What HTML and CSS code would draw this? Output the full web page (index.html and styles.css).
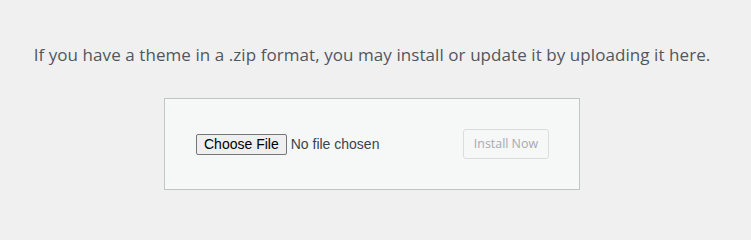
FILE: index.html
```html
<!DOCTYPE html>
<html lang="en">
<head>
<meta charset="utf-8">
<title>Upload Theme</title>
<link rel="stylesheet" href="styles.css">
</head>
<body>
<div class="upload-theme">
  <p class="install-help">If you have a theme in a .zip format, you may install or update it by uploading it here.</p>
  <div class="form-row">
    <form class="wp-upload-form">
      <div class="file-field">
        <span class="file-button">Choose File</span>
        <span class="file-name">No file chosen</span>
      </div>
      <button type="button" class="button" disabled>Install Now</button>
    </form>
  </div>
</div>
</body>
</html>
```
FILE: styles.css
```css
html, body {
  margin: 0;
  padding: 0;
  background: #f0f0f1;
}

.upload-theme {
  padding: 43px 7px 0 0;
  font-family: "Open Sans", "Noto Sans", sans-serif;
  color: #50575e;
}

.install-help {
  margin: 0;
  text-align: center;
  font-size: 17px;
  letter-spacing: 0.07px;
  line-height: 24px;
}

.form-row {
  display: flex;
  justify-content: center;
  margin-top: 31px;
}

.wp-upload-form {
  box-sizing: border-box;
  width: 416px;
  display: flex;
  align-items: center;
  padding: 30px 30px 30px 31px;
  border: 1px solid #c3c4c7;
  background: #f6f7f7;
  margin: 0;
}

.file-field {
  display: flex;
  align-items: center;
  font-family: "Liberation Sans", Arial, sans-serif;
  font-size: 14px;
}

.file-button {
  box-sizing: border-box;
  height: 21px;
  line-height: 19px;
  padding: 0 7px;
  border: 1px solid #767676;
  border-radius: 2px;
  background: #efefef;
  color: #000;
  margin-right: 4px;
}

.file-name {
  color: #3c434a;
}

.button {
  margin-left: auto;
  box-sizing: border-box;
  height: 30px;
  padding: 0 10px;
  border: 1px solid #dcdcde;
  border-radius: 3px;
  background: #f6f7f7;
  color: #a7aaad;
  font-family: "Open Sans", "Noto Sans", sans-serif;
  font-size: 12.4px;
  line-height: 28px;
}
```
